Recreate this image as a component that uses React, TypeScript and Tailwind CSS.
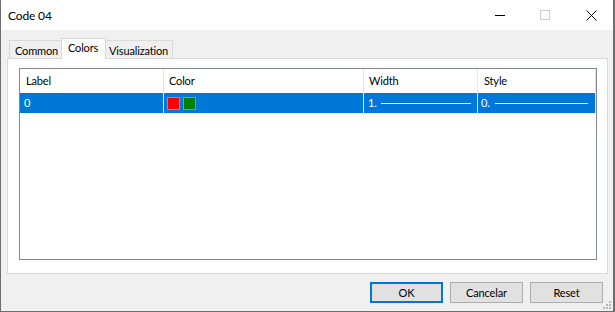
import React from "react";

export default function App() {
  return (
    <div className="w-[615px] h-[312px] bg-[#6e6e6e] overflow-hidden text-[11px] tracking-[-0.15px] text-black font-['Lato',sans-serif]">
      <div className="relative w-[614px] h-[312px] border-l border-r border-b border-[#6e6e6e] flex flex-col bg-[#f0f0f0]">
        {/* Title bar */}
        <div className="h-[30px] bg-white flex items-center shrink-0">
          <span className="pl-[7px] leading-none text-[12px] pt-[1px]">Code 04</span>
          <div className="flex-1" />
          <div className="w-[10px] h-[1px] bg-black mr-[35px]" />
          <div className="w-[10px] h-[10px] border border-[#cccccc] mr-[36px] -mt-[1px]" />
          <svg width="11" height="11" viewBox="0 0 11 11" className="mr-[16px]">
            <path d="M0.5 0.5 L10.5 10.5 M10.5 0.5 L0.5 10.5" stroke="#000" strokeWidth="1" />
          </svg>
        </div>

        {/* Body */}
        <div className="flex-1 flex flex-col pl-[6px] pr-[5px] pt-[8px]">
          {/* Tabs */}
          <div className="h-[20px] flex items-end pl-[2px] relative z-10 whitespace-nowrap">
            <div className="h-[18px] w-[52px] border-l border-t border-[#d9d9d9] bg-[#f0f0f0] flex items-center pl-[5px] pt-[1px] leading-none">
              Common
            </div>
            <div className="h-[21px] w-[45px] -mb-[1px] border-l border-r border-t border-[#d9d9d9] bg-white flex items-center pl-[6px] pb-[3px] leading-none">
              Colors
            </div>
            <div className="h-[18px] w-[67px] border-r border-t border-[#d9d9d9] bg-[#f0f0f0] flex items-center pl-[3px] pt-[1px] leading-none">
              Visualization
            </div>
          </div>

          {/* Panel */}
          <div className="h-[216px] border border-[#d9d9d9] bg-white pt-[9px] pl-[11px] pr-[10px]">
            <div className="h-[192px] border border-[#828790] bg-white flex flex-col">
              {/* Header */}
              <div className="h-[24px] flex">
                <div className="w-[144px] border-r border-[#e5e5e5] flex items-center pl-[6px]">Label</div>
                <div className="w-[200px] border-r border-[#e5e5e5] flex items-center pl-[5px]">Color</div>
                <div className="w-[114px] border-r border-[#e5e5e5] flex items-center pl-[5px]">Width</div>
                <div className="w-[118px] border-r border-[#e5e5e5] flex items-center pl-[6px]">Style</div>
              </div>
              {/* Row */}
              <div className="h-[20px] flex bg-[#0078d7] text-white">
                <div className="w-[144px] border-r border-[#e5e5e5] flex items-center pl-[4px]">0</div>
                <div className="w-[200px] border-r border-[#e5e5e5] flex items-center pl-[3px] gap-[3px]">
                  <div className="w-[13px] h-[13px] bg-[#ff0000] border border-[#909090]" />
                  <div className="w-[13px] h-[13px] bg-[#008000] border border-[#909090]" />
                </div>
                <div className="w-[114px] border-r border-[#e5e5e5] flex items-center pl-[4px]">
                  <span className="w-[13px]">1.</span>
                  <div className="w-[90px] h-[1px] bg-white" />
                </div>
                <div className="w-[118px] border-r border-[#e5e5e5] flex items-center pl-[3px]">
                  <span className="w-[14px]">0.</span>
                  <div className="w-[93px] h-[1px] bg-white" />
                </div>
              </div>
            </div>
          </div>

          {/* Buttons */}
          <div className="flex justify-end gap-[7px] pr-[5px] mt-[8px]">
            <button className="h-[21px] w-[73px] border-2 border-[#0078d7] bg-[#e1e1e1] flex items-center justify-center leading-none">
              OK
            </button>
            <button className="h-[21px] w-[73px] border border-[#adadad] bg-[#e1e1e1] flex items-center justify-center leading-none">
              Cancelar
            </button>
            <button className="h-[21px] w-[73px] border border-[#adadad] bg-[#e1e1e1] flex items-center justify-center leading-none">
              Reset
            </button>
          </div>
        </div>

        {/* Size grip */}
        <svg width="10" height="10" viewBox="0 0 10 10" className="absolute right-[1px] bottom-[1px]">
          <rect x="7" y="1" width="2" height="2" fill="#b8b8b8" />
          <rect x="4" y="4" width="2" height="2" fill="#b8b8b8" />
          <rect x="7" y="4" width="2" height="2" fill="#b8b8b8" />
          <rect x="1" y="7" width="2" height="2" fill="#b8b8b8" />
          <rect x="4" y="7" width="2" height="2" fill="#b8b8b8" />
          <rect x="7" y="7" width="2" height="2" fill="#b8b8b8" />
        </svg>
      </div>
    </div>
  );
}
